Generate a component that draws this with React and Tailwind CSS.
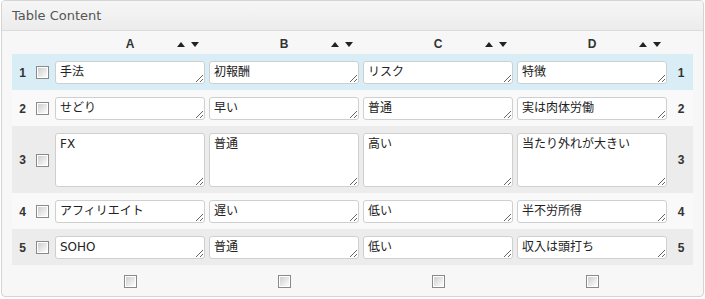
import React from "react";

const rows = [
  { n: 1, cells: ["手法", "初報酬", "リスク", "特徴"], bg: "bg-[#d9edf7]", tall: false },
  { n: 2, cells: ["せどり", "早い", "普通", "実は肉体労働"], bg: "bg-[#f9f9f9]", tall: false },
  { n: 3, cells: ["FX", "普通", "高い", "当たり外れが大きい"], bg: "bg-[#ececec]", tall: true },
  { n: 4, cells: ["アフィリエイト", "遅い", "低い", "半不労所得"], bg: "bg-[#f9f9f9]", tall: false },
  { n: 5, cells: ["SOHO", "普通", "低い", "収入は頭打ち"], bg: "bg-[#ececec]", tall: false },
];

const cols = ["A", "B", "C", "D"];

function Check() {
  return (
    <div className="w-[13px] h-[13px] border border-[#8a8a8a] bg-white p-[1px]">
      <div className="w-full h-full bg-linear-to-br from-[#cfcfcf] to-[#fdfdfd]" />
    </div>
  );
}

function Arrows() {
  return (
    <div className="flex items-center gap-[6px] pr-[8px]">
      <svg width="8" height="5" viewBox="0 0 8 5">
        <path d="M0 5 L4 0 L8 5 Z" fill="#222" />
      </svg>
      <svg width="8" height="5" viewBox="0 0 8 5">
        <path d="M0 0 L8 0 L4 5 Z" fill="#222" />
      </svg>
    </div>
  );
}

export default function App() {
  const jp = { fontFamily: '"DejaVu Sans", "Noto Sans CJK JP", sans-serif' };
  return (
    <div className="w-[705px] h-[299px] bg-white">
      <div className="ml-[1px] w-[703px] h-[297px] border border-[#d4d4d4] rounded-[4px] overflow-hidden bg-[#f7f7f7] flex flex-col">
        <div
          className="h-[30px] border-b border-[#dcdcdc] bg-linear-to-b from-[#f6f6f6] to-[#ececec] flex items-center pl-[10px] text-[13px] text-[#555]"
          style={{ fontFamily: '"DejaVu Sans", sans-serif' }}
        >
          Table Content
        </div>
        <div className="px-[10px] pt-[3px] flex flex-col">
          <div
            className="grid grid-cols-[20px_21px_154px_154px_154px_154px_24px] h-[20px] items-center"
            style={{ fontFamily: '"Liberation Sans", sans-serif' }}
          >
            <div />
            <div />
            {cols.map((c) => (
              <div key={c} className="grid grid-cols-[1fr_auto_1fr] items-center">
                <div />
                <div className="text-[12px] font-bold text-[#333]">{c}</div>
                <div className="flex justify-end">
                  <Arrows />
                </div>
              </div>
            ))}
            <div />
          </div>
          {rows.map((r) => (
            <div
              key={r.n}
              className={`grid grid-cols-[20px_21px_154px_154px_154px_154px_24px] items-center pt-[7px] pb-[6px] ${r.bg}`}
            >
              <div
                className="text-right pr-[6px] text-[12px] font-bold text-[#333]"
                style={{ fontFamily: '"Liberation Sans", sans-serif' }}
              >
                {r.n}
              </div>
              <div className="pl-[4px] flex items-center">
                <Check />
              </div>
              {r.cells.map((t, i) => (
                <div key={i} className="px-[2px]">
                  <textarea
                    readOnly
                    defaultValue={t}
                    className={`block w-full ${r.tall ? "h-[54px]" : "h-[23px]"} border border-[#cfcfcf] rounded-[3px] bg-white px-[4px] py-[2px] text-[12px] leading-[16px] text-[#222] outline-none overflow-hidden`}
                    style={jp}
                  />
                </div>
              ))}
              <div
                className="text-center text-[12px] font-bold text-[#333]"
                style={{ fontFamily: '"Liberation Sans", sans-serif' }}
              >
                {r.n}
              </div>
            </div>
          ))}
          <div className="grid grid-cols-[20px_21px_154px_154px_154px_154px_24px] pt-[10px]">
            <div />
            <div />
            {cols.map((c) => (
              <div key={c} className="flex justify-center">
                <Check />
              </div>
            ))}
            <div />
          </div>
        </div>
      </div>
    </div>
  );
}
